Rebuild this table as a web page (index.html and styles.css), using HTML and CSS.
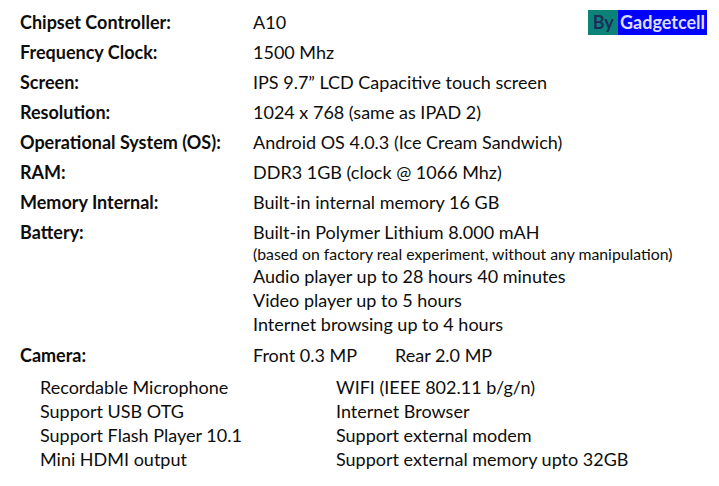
FILE: index.html
```html
<!DOCTYPE html>
<html>
<head>
<meta charset="utf-8">
<link rel="stylesheet" href="styles.css">
</head>
<body>
<div class="page">
  <div class="badge"><span class="by">&nbsp;By&nbsp;</span><span class="brand">Gadgetcell</span></div>
  <div class="specs">
    <div class="label">Chipset Controller:</div><div class="value">A10</div>
    <div class="label">Frequency Clock:</div><div class="value">1500 Mhz</div>
    <div class="label">Screen:</div><div class="value">IPS 9.7” LCD Capacitive touch screen</div>
    <div class="label">Resolution:</div><div class="value">1024 x 768 (same as IPAD 2)</div>
    <div class="label">Operational System (OS):</div><div class="value">Android OS 4.0.3 (Ice Cream Sandwich)</div>
    <div class="label">RAM:</div><div class="value">DDR3 1GB (clock @ 1066 Mhz)</div>
    <div class="label">Memory Internal:</div><div class="value">Built-in internal memory 16 GB</div>
    <div class="label">Battery:</div>
    <div class="value stack">
      <div class="line">Built-in Polymer Lithium 8.000 mAH</div>
      <div class="note">(based on factory real experiment, without any manipulation)</div>
      <div class="sub">Audio player up to 28 hours 40 minutes</div>
      <div class="sub">Video player up to 5 hours</div>
      <div class="sub">Internet browsing up to 4 hours</div>
    </div>
    <div class="label cam">Camera:</div><div class="value cam"><span class="front">Front 0.3 MP</span>Rear 2.0 MP</div>
  </div>
  <div class="features">
    <div class="col left">
      <div>Recordable Microphone</div>
      <div>Support USB OTG</div>
      <div>Support Flash Player 10.1</div>
      <div>Mini HDMI output</div>
    </div>
    <div class="col">
      <div>WIFI (IEEE 802.11 b/g/n)</div>
      <div>Internet Browser</div>
      <div>Support external modem</div>
      <div>Support external memory upto 32GB</div>
    </div>
  </div>
</div>
</body>
</html>
```

FILE: styles.css
```css
html, body {
  margin: 0;
  padding: 0;
  background: #ffffff;
}
body {
  font-family: "Lato", "Open Sans", sans-serif;
  color: #0d0d0d;
  font-size: 18px;
}
.page {
  position: relative;
  width: 719px;
  height: 486px;
  padding: 7px 0 0 20px;
  box-sizing: border-box;
}
.badge {
  position: absolute;
  top: 10px;
  left: 588px;
  display: flex;
  height: 25px;
  line-height: 25px;
  font-weight: bold;
  font-size: 18px;
}
.badge .by {
  background: #0b8379;
  color: #1d2d5a;
  width: 30px;
  text-align: center;
}
.badge .brand {
  background: #0000ff;
  color: #dcdcff;
  width: 89px;
  text-align: center;
}
.specs {
  display: grid;
  grid-template-columns: 233px 1fr;
}
.label {
  font-weight: bold;
  line-height: 30px;
}
.value {
  line-height: 30px;
}
.stack .line {
  line-height: 30px;
}
.stack .note {
  font-size: 15.8px;
  line-height: 14px;
  margin-bottom: 3px;
}
.stack .sub {
  line-height: 24px;
}
.cam {
  margin-top: 4px;
}
.front {
  display: inline-block;
  width: 142px;
}
.features {
  display: flex;
  margin-top: 5px;
  padding-left: 20px;
  line-height: 24px;
}
.col.left {
  width: 296px;
}
```
